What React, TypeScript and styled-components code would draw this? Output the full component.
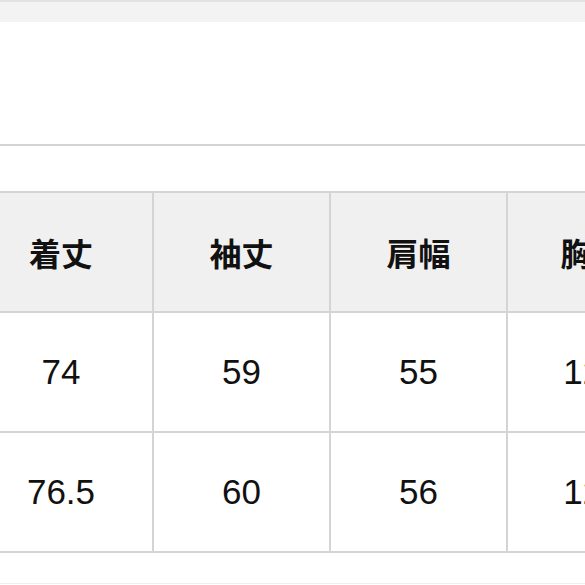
import styled, { createGlobalStyle } from 'styled-components'

const GlobalStyle = createGlobalStyle`
  html, body {
    margin: 0;
    padding: 0;
    background: #ffffff;
    overflow: hidden;
  }
  body {
    font-family: "Liberation Sans", "Noto Sans CJK JP", Arial, sans-serif;
    color: #111111;
  }
`

const Page = styled.div`
  width: 585px;
  height: 585px;
  overflow: hidden;
  display: flex;
  flex-direction: column;
`

const TopBand = styled.div`
  height: 20px;
  flex: none;
  background: #f3f3f3;
  border-top: 2px solid #e2e2e2;
`

const Blank = styled.div<{ $height: number }>`
  height: ${({ $height }) => $height}px;
  flex: none;
`

const Divider = styled.div`
  height: 2px;
  flex: none;
  background: #d4d4d4;
`

const TableScroll = styled.div`
  flex: none;
  overflow: hidden;
`

const SizeTable = styled.table`
  border-collapse: collapse;
  table-layout: fixed;
  margin-left: -32px;
  width: 709px;
`

const Col = styled.col<{ $width: number }>`
  width: ${({ $width }) => $width}px;
`

const HeadCell = styled.th`
  height: 118px;
  padding: 0;
  background: #f0f0f0;
  border: 2px solid #d4d4d4;
  font-family: "Noto Sans CJK JP", "Noto Sans CJK SC", sans-serif;
  font-size: 32px;
  font-weight: 700;
  text-align: center;
  vertical-align: middle;
  white-space: nowrap;
  overflow: hidden;
`

const Cell = styled.td`
  height: 118px;
  padding: 0;
  background: #ffffff;
  border: 2px solid #d4d4d4;
  font-family: "Liberation Sans", Arial, sans-serif;
  font-size: 35px;
  text-align: center;
  vertical-align: middle;
  white-space: nowrap;
  overflow: hidden;
`

const Footer = styled.div`
  height: 30px;
  flex: none;
  border-bottom: 1px solid #eeeeee;
`

const headers = ['着丈', '袖丈', '肩幅', '胸囲']
const rows = [
  ['74', '59', '55', '120'],
  ['76.5', '60', '56', '124'],
]

export default function App() {
  return (
    <>
      <GlobalStyle />
      <Page>
        <TopBand />
        <Blank $height={122} />
        <Divider />
        <Blank $height={45} />
        <TableScroll>
          <SizeTable>
            <colgroup>
              <Col $width={184} />
              <Col $width={177} />
              <Col $width={177} />
              <Col $width={171} />
            </colgroup>
            <thead>
              <tr>
                {headers.map(h => (
                  <HeadCell key={h}>{h}</HeadCell>
                ))}
              </tr>
            </thead>
            <tbody>
              {rows.map((row, i) => (
                <tr key={i}>
                  {row.map((value, j) => (
                    <Cell key={j}>{value}</Cell>
                  ))}
                </tr>
              ))}
            </tbody>
          </SizeTable>
        </TableScroll>
        <Footer />
      </Page>
    </>
  )
}
